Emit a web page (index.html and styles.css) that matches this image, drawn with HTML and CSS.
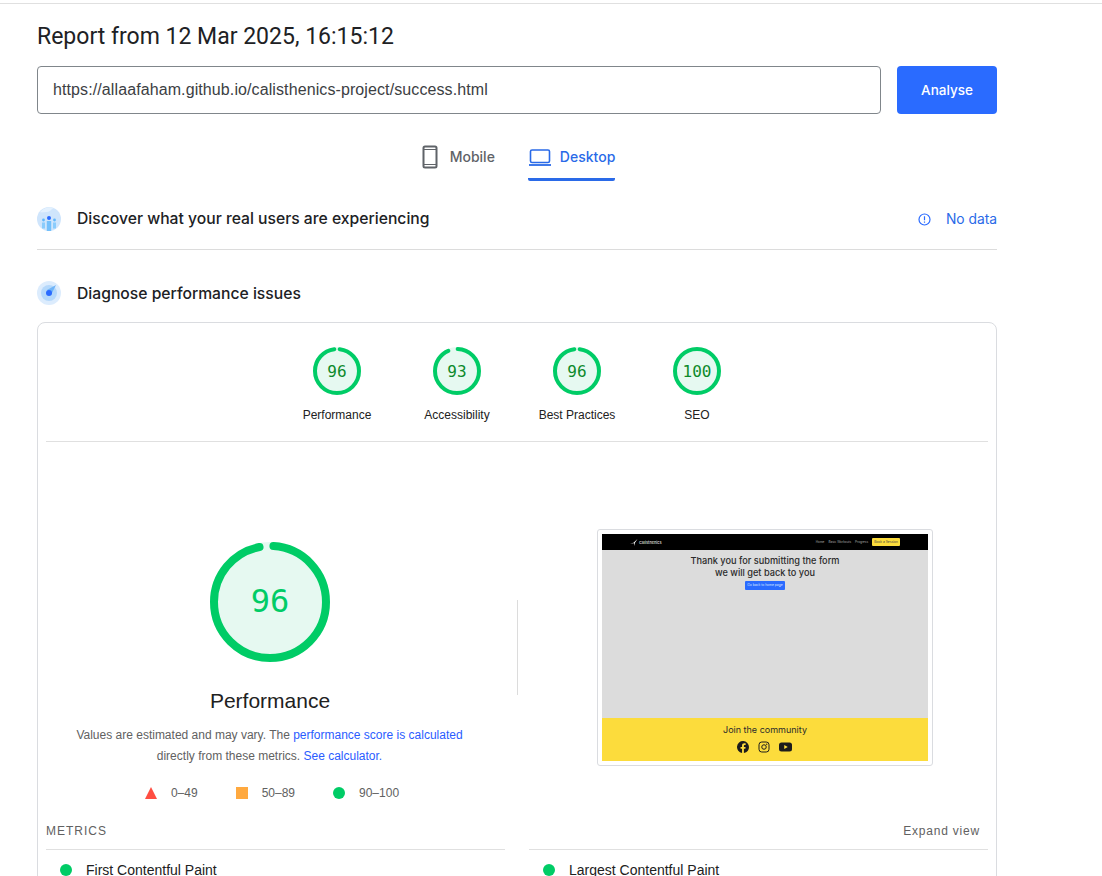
FILE: index.html
```html
<!DOCTYPE html>
<html lang="en">
<head>
    <meta charset="UTF-8">
    <link rel="stylesheet" href="styles.css">
    <title>PageSpeed Insights</title>
</head>
<body>
<div class="topline"></div>
<div class="page">
    <h1 class="title">Report from 12 Mar 2025, 16:15:12</h1>

    <div class="urlrow">
        <div class="urlbox">https://allaafaham.github.io/calisthenics-project/success.html</div>
        <button class="analyse">Analyse</button>
    </div>

    <div class="tabs">
        <div class="tab">
            <svg width="24" height="24" viewBox="0 0 24 24"><rect x="5.5" y="1.5" width="13" height="21" rx="1.5" fill="none" stroke="#5f6368" stroke-width="2"/><path d="M5.5 4.5h13M5.5 19.5h13" stroke="#5f6368" stroke-width="1.2"/></svg>
            <span>Mobile</span>
        </div>
        <div class="tab active">
            <svg width="24" height="24" viewBox="0 0 24 24"><rect x="2.5" y="5" width="19" height="12.5" rx="1.5" fill="none" stroke="#2a6ae8" stroke-width="1.6"/><path d="M1 20h22" stroke="#2a6ae8" stroke-width="1.8"/></svg>
            <span>Desktop</span>
        </div>
    </div>

    <div class="section first">
        <svg class="secicon" width="24" height="24" viewBox="0 0 24 24">
            <circle cx="12" cy="12" r="12" fill="#cfe5fc"/>
            <path d="M3 5a12 12 0 0 1 14-4c-3 1-4 4-7 4s-5 1-7 0z" fill="#e4f1fe"/>
            <circle cx="12" cy="11" r="2" fill="#2a6bff"/>
            <rect x="9.8" y="14" width="4.4" height="10" fill="#74c0fb"/>
            <circle cx="6.5" cy="13" r="1.4" fill="#5fb6fb"/>
            <rect x="5" y="15.5" width="3" height="6" fill="#8accfc"/>
            <circle cx="17.5" cy="13" r="1.4" fill="#5fb6fb"/>
            <rect x="16" y="15.5" width="3" height="6" fill="#8accfc"/>
        </svg>
        <span class="sectext">Discover what your real users are experiencing</span>
        <div class="nodata">
            <svg width="13" height="13" viewBox="0 0 13 13"><circle cx="6.5" cy="6.5" r="5.5" fill="none" stroke="#2a6bff" stroke-width="1.2"/><path d="M6.5 3.3v4M6.5 8.5v1.3" stroke="#2a6bff" stroke-width="1.2"/></svg>
            <span>No data</span>
        </div>
    </div>

    <div class="section second">
        <svg class="secicon" width="24" height="24" viewBox="0 0 24 24">
            <circle cx="12" cy="12" r="12" fill="#dcecfd"/>
            <circle cx="12" cy="12" r="8" fill="#b4d8fb"/>
            <path d="M10 9l9-5-5 10z" fill="#6fb4f8"/>
            <circle cx="12" cy="12" r="3" fill="#2a6bff"/>
        </svg>
        <span class="sectext">Diagnose performance issues</span>
    </div>

    <div class="card">
        <div class="gauges">
            <div class="gauge">
                <div class="ring">
                    <svg width="48" height="48" viewBox="0 0 48 48"><circle cx="24" cy="24" r="24" fill="#e6f9f1"/><circle class="arc" cx="24" cy="24" r="22" pathLength="100" fill="none" stroke-width="4" stroke-dasharray="96 4" stroke-dashoffset="-2" transform="rotate(-90 24 24)"/></svg>
                    <span class="num">96</span>
                </div>
                <div class="glabel">Performance</div>
            </div>
            <div class="gauge">
                <div class="ring">
                    <svg width="48" height="48" viewBox="0 0 48 48"><circle cx="24" cy="24" r="24" fill="#e6f9f1"/><circle class="arc" cx="24" cy="24" r="22" pathLength="100" fill="none" stroke-width="4" stroke-dasharray="93 7" stroke-dashoffset="-0.5" transform="rotate(-90 24 24)"/></svg>
                    <span class="num">93</span>
                </div>
                <div class="glabel">Accessibility</div>
            </div>
            <div class="gauge">
                <div class="ring">
                    <svg width="48" height="48" viewBox="0 0 48 48"><circle cx="24" cy="24" r="24" fill="#e6f9f1"/><circle class="arc" cx="24" cy="24" r="22" pathLength="100" fill="none" stroke-width="4" stroke-dasharray="96 4" stroke-dashoffset="-2" transform="rotate(-90 24 24)"/></svg>
                    <span class="num">96</span>
                </div>
                <div class="glabel">Best Practices</div>
            </div>
            <div class="gauge">
                <div class="ring">
                    <svg width="48" height="48" viewBox="0 0 48 48"><circle cx="24" cy="24" r="24" fill="#e6f9f1"/><circle class="arc" cx="24" cy="24" r="22" fill="none" stroke-width="4"/></svg>
                    <span class="num">100</span>
                </div>
                <div class="glabel">SEO</div>
            </div>
        </div>

        <div class="hero">
            <div class="heroleft">
                <div class="bigring">
                    <svg width="120" height="120" viewBox="0 0 120 120"><circle cx="60" cy="60" r="60" fill="#e6f9f1"/><circle class="arc" cx="60" cy="60" r="56" pathLength="100" fill="none" stroke-width="8" stroke-dasharray="96 4" stroke-dashoffset="-1" transform="rotate(-90 60 60)"/></svg>
                    <span class="bignum">96</span>
                </div>
                <div class="herotitle">Performance</div>
                <p class="desc">Values are estimated and may vary. The <a href="#">performance score is calculated</a><br>directly from these metrics. <a href="#">See calculator.</a></p>
                <div class="legend">
                    <div class="legitem">
                        <svg width="12" height="12" viewBox="0 0 12 12"><path d="M6 0l6 12H0z" fill="#ff4e42"/></svg>
                        <span>0–49</span>
                    </div>
                    <div class="legitem">
                        <svg width="12" height="12" viewBox="0 0 12 12"><rect width="12" height="12" fill="#ffa93f"/></svg>
                        <span>50–89</span>
                    </div>
                    <div class="legitem">
                        <svg width="12" height="12" viewBox="0 0 12 12"><circle cx="6" cy="6" r="6" fill="#00cc66"/></svg>
                        <span>90–100</span>
                    </div>
                </div>
            </div>

            <div class="vline"></div>

            <div class="shot">
                <div class="shotinner">
                    <div class="shotnav">
                        <div class="shotlogo">
                            <svg width="8" height="8" viewBox="0 0 8 8"><path d="M0 5.5l3.5-.8L7.5 1 4.800 5 5 8 4 5.200z" fill="#fff"/></svg>
                            <span>Calisthenics</span>
                        </div>
                        <div class="shotlinks">
                            <span>Home</span>
                            <span>Basic Workouts</span>
                            <span>Progress</span>
                            <span class="shotbook">Book a Session</span>
                        </div>
                    </div>
                    <div class="shotmain">
                        <div class="shothead">Thank you for submitting the form<br>we will get back to you</div>
                        <div class="shotbtn">Go back to home page</div>
                    </div>
                    <div class="shotfoot">
                        <div class="shotjoin">Join the community</div>
                        <div class="shoticons">
                            <svg width="12" height="12" viewBox="0 0 24 24"><path fill="#1c1c1c" d="M24 12a12 12 0 1 0-13.9 11.900v-8.400H7.100V12h3V9.400c0-3 1.800-4.700 4.500-4.700 1.300 0 2.700.2 2.700.2v3h-1.500c-1.500 0-2 .9-2 1.900V12h3.400l-.5 3.500h-2.900v8.400A12 12 0 0 0 24 12z"/></svg>
                            <svg width="12" height="12" viewBox="0 0 24 24"><rect x="2" y="2" width="20" height="20" rx="5.5" fill="none" stroke="#1c1c1c" stroke-width="2"/><circle cx="12" cy="12" r="4.5" fill="none" stroke="#1c1c1c" stroke-width="2"/><circle cx="17.5" cy="6.5" r="1.3" fill="#1c1c1c"/></svg>
                            <svg width="13" height="12" viewBox="0 0 26 24"><rect x="0" y="3" width="26" height="18" rx="5" fill="#1c1c1c"/><path d="M10.5 8l7 4-7 4z" fill="#fcdc3c"/></svg>
                        </div>
                    </div>
                </div>
            </div>
        </div>

        <div class="metricshead">
            <span>METRICS</span>
            <span class="expand">Expand view</span>
        </div>
        <div class="metrics">
            <div class="metric">
                <svg width="12" height="12" viewBox="0 0 12 12"><circle cx="6" cy="6" r="6" fill="#00cc66"/></svg>
                <span>First Contentful Paint</span>
            </div>
            <div class="metric">
                <svg width="12" height="12" viewBox="0 0 12 12"><circle cx="6" cy="6" r="6" fill="#00cc66"/></svg>
                <span>Largest Contentful Paint</span>
            </div>
        </div>
    </div>
</div>
</body>
</html>
```

FILE: styles.css
```css
html, body {
    margin: 0;
    height: 876px;
    overflow: hidden;
    background: #fff;
}
body {
    font-family: "Liberation Sans", Arial, sans-serif;
    color: #212121;
}
.topline {
    margin-top: 3px;
    height: 1px;
    background: #e0e0e0;
}
.page {
    width: 960px;
    height: 872px;
    overflow: hidden;
    margin-left: 37px;
}
.title {
    margin: 0;
    padding-top: 18px;
    height: 44px;
    font-family: Roboto, sans-serif;
    font-size: 23px;
    line-height: 30px;
    font-weight: 400;
    color: #202124;
}
.urlrow {
    display: flex;
    gap: 16px;
    height: 48px;
}
.urlbox {
    flex: 1;
    box-sizing: border-box;
    border: 1px solid #80868b;
    border-radius: 4px;
    padding: 0 15px;
    line-height: 46px;
    font-size: 16px;
    letter-spacing: .1px;
    color: #3c4043;
}
.analyse {
    width: 100px;
    border: none;
    border-radius: 4px;
    background: #2a6bff;
    color: #fff;
    font-family: Inter, sans-serif;
    font-size: 13.5px;
    font-weight: 500;
}
.tabs {
    display: flex;
    justify-content: center;
    gap: 33px;
    padding-right: 1px;
    margin-top: 19px;
    height: 48px;
    font-family: Inter, sans-serif;
    font-size: 14px;
    font-weight: 500;
    color: #5f6368;
}
.tab {
    display: flex;
    align-items: flex-start;
    gap: 8px;
    padding-top: 12px;
    box-sizing: border-box;
    line-height: 24px;
}
.tab.active {
    color: #2a6ae8;
    border-bottom: 3px solid #2a6ae8;
    border-radius: 2px;
}
.section {
    display: flex;
    align-items: center;
    gap: 16px;
    height: 24px;
}
.section.first {
    margin-top: 26px;
    padding-bottom: 18px;
    border-bottom: 1px solid #dcdcdc;
}
.section.first .sectext {
    padding-bottom: 2px;
}
.section.second {
    margin-top: 31px;
}
.secicon {
    flex: none;
}
.sectext {
    font-family: Inter, sans-serif;
    font-size: 15.7px;
    font-weight: 500;
    color: #202124;
}
.nodata {
    margin-left: auto;
    display: flex;
    align-items: center;
    gap: 15px;
    font-family: Inter, sans-serif;
    font-size: 13.8px;
    color: #2a6ae8;
}
.card {
    margin-top: 17px;
    box-sizing: border-box;
    height: 700px;
    border: 1px solid #dadce0;
    border-radius: 8px;
    padding: 24px 8px 0;
}
.gauges {
    display: flex;
    justify-content: center;
    height: 94px;
    border-bottom: 1px solid #e0e0e0;
}
.gauge {
    width: 120px;
    display: flex;
    flex-direction: column;
    align-items: center;
}
.ring {
    position: relative;
    width: 48px;
    height: 48px;
}
.ring svg, .bigring svg {
    display: block;
}
.arc {
    stroke: #00cc66;
    stroke-linecap: round;
}
.num {
    position: absolute;
    inset: 0;
    text-align: center;
    line-height: 50px;
    font-family: "DejaVu Sans Mono", monospace;
    font-size: 16px;
    color: #0c8a2b;
}
.glabel {
    margin-top: 12px;
    font-size: 12px;
    line-height: 16px;
    color: #212121;
}
.hero {
    display: flex;
    align-items: flex-start;
    height: 381px;
}
.heroleft {
    width: 448px;
    padding-top: 100px;
    display: flex;
    flex-direction: column;
    align-items: center;
}
.bigring {
    position: relative;
    width: 120px;
    height: 120px;
}
.bignum {
    position: absolute;
    inset: 0;
    text-align: center;
    line-height: 118px;
    font-family: "DejaVu Sans Mono", monospace;
    font-size: 32px;
    color: #00cc66;
}
.herotitle {
    margin-top: 25px;
    font-size: 21px;
    line-height: 28px;
    color: #212121;
}
.desc {
    margin: 10px 0 0;
    padding-right: 1px;
    text-align: center;
    font-size: 12px;
    line-height: 21px;
    color: #616161;
}
.desc a {
    color: #2a5cff;
    text-decoration: none;
}
.legend {
    display: flex;
    gap: 38px;
    margin-top: 19px;
    margin-left: 4px;
    font-size: 12px;
    line-height: 14px;
    color: #616161;
}
.legitem {
    display: flex;
    align-items: center;
    gap: 14px;
}
.vline {
    width: 1px;
    height: 95px;
    margin-top: 158px;
    margin-left: 23px;
    background: #dcdcdc;
}
.shot {
    margin-top: 87px;
    margin-left: 79px;
    width: 336px;
    height: 237px;
    box-sizing: border-box;
    border: 1px solid #dadce0;
    border-radius: 3px;
    padding: 4px;
}
.shotinner {
    display: flex;
    flex-direction: column;
    height: 227px;
    font-family: Inter, sans-serif;
}
.shotnav {
    height: 16px;
    background: #000;
    display: flex;
    align-items: center;
    justify-content: space-between;
    padding: 0 28px;
    color: #aaa;
    font-size: 3.1px;
}
.shotlogo {
    display: flex;
    align-items: center;
    gap: 1px;
    font-size: 3.8px;
    font-weight: 600;
    color: #ccc;
}
.shotlinks {
    display: flex;
    align-items: center;
    gap: 4px;
}
.shotbook {
    background: #fcdc3c;
    color: #444;
    padding: 2px 2px;
    border-radius: 1px;
    font-size: 3.3px;
}
.shotmain {
    flex: 1;
    background: #dcdcdc;
    display: flex;
    flex-direction: column;
    align-items: center;
    padding-top: 5px;
}
.shothead {
    text-align: center;
    font-size: 9.2px;
    line-height: 12px;
    font-weight: 500;
    color: #2b2b2b;
}
.shotbtn {
    margin-top: 2px;
    background: #2a6bff;
    color: #dbe6ff;
    font-size: 3.3px;
    line-height: 5px;
    padding: 2px 2.5px;
    border-radius: 1px;
}
.shotfoot {
    height: 43px;
    background: #fcdc3c;
    display: flex;
    flex-direction: column;
    align-items: center;
}
.shotjoin {
    margin-top: 6px;
    font-size: 9px;
    line-height: 12px;
    color: #2b2b2b;
}
.shoticons {
    display: flex;
    gap: 9px;
    margin-top: 5px;
    margin-right: 1px;
}
.metricshead {
    display: flex;
    justify-content: space-between;
    padding-right: 8px;
    height: 26px;
    font-size: 12px;
    line-height: 16px;
    letter-spacing: 1px;
    color: #616161;
}
.expand {
    letter-spacing: .8px;
}
.metrics {
    display: flex;
    gap: 24px;
}
.metric {
    flex: 1;
    display: flex;
    align-items: center;
    gap: 14px;
    padding: 12px 14px;
    border-top: 1px solid #e0e0e0;
    font-size: 14px;
    line-height: 16px;
    color: #212121;
}
```
